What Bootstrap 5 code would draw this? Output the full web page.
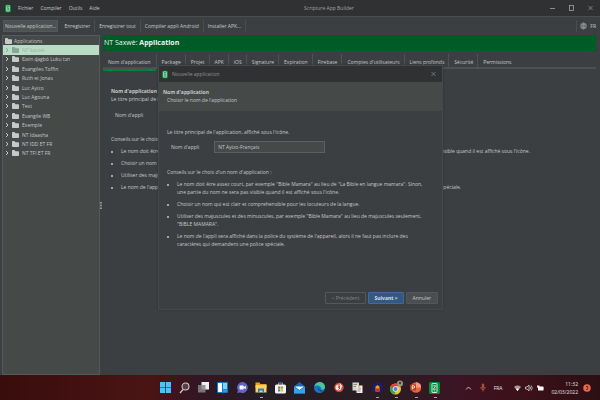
<!DOCTYPE html>
<html lang="fr">
<head>
<meta charset="utf-8">
<meta name="viewport" content="width=device-width, initial-scale=1">
<title>Scripture App Builder</title>
<link href="https://cdn.jsdelivr.net/npm/bootstrap@5.3.0/dist/css/bootstrap.min.css" rel="stylesheet">
<style>
body{font-family:"Open Sans",sans-serif;font-size:5px;line-height:8px;color:#c6c8c9;background:#3c3f41;overflow:hidden}
button,input{font:inherit;color:inherit;border:0;background:none;padding:0;margin:0}
svg{display:block;flex:none}
.titlebar{height:17px;background:#2f3133;border-bottom:1px solid #4a4d4f;padding-left:5px;gap:7px}
.menus{gap:7px}
.winbtns{gap:14px;margin-right:7px}
.wintitle{color:#a2a4a5}
.toolbar-row{height:18px;padding:0 4px 0 3px}
.toolbar-row button{height:12px;padding:0 4px;border-right:1px solid #4b4e50;white-space:nowrap}
.toolbar-row button.hot{background:#4c5152;padding:0 1px;border:1px solid #535859;margin-right:2px}
.lang{border-left:1px solid #4b4e50;padding:2px 0 2px 3px;gap:3px}
.tree{width:98px;margin-left:2px;background:#454948;border:1px solid #55595a}
.tree ul{display:grid;grid-template-rows:repeat(13,1fr);height:122px}
.tree li{gap:3px;padding-left:2px}
.tree li.top{gap:2px}
.tree li.sel{background:#b9dcc5;color:#9fb5a6}
.tree li.sel svg{color:#8aa496}
.splitter{width:3px}
.apphead{background:#005c27;color:#eef4f0;font-size:7px;line-height:16px;padding-left:1px}
.tabs{height:18px;padding-top:3px;border-bottom:2px solid #4d5052}
.tabs button{height:15px;padding:0 4px 0 5px;position:relative;white-space:nowrap;line-height:14px}
.tabs button+button{border-left:1px solid #4f5254}
.tabs button.cur{padding:0 5px}
.tabs button.cur::after{content:"";position:absolute;left:0;right:0;bottom:-2px;height:2px;background:#008038}
.main-pane{padding:18px 9px 0 8px;white-space:nowrap;overflow:hidden}
.field-row{padding:8px 0 16px 4px}
.tips{padding-left:10px;margin:4px 0 0}
.tips li{margin-bottom:4px}
.dialog-box{position:absolute;left:158px;top:65px;width:285px;height:245px;background:#3c3f41;border:1px solid #45484a;box-shadow:0 0 2px #303234}
.dlg-title{height:16px;background:#2f3133;color:#8f9192;padding:0 6px 0 3px;gap:4px}
.dlg-head{background:#454948;height:29px;padding:6px 4px}
.dlg-body{padding:17px 15px 0 8px}
.dlg-body .field-row{padding:5px 0 15px 4px;gap:15px}
.dlg-body input{width:111px;height:12px;background:#454948;border:1px solid #5c6061;padding:0 3px}
.dlg-foot{padding:0 4px 5px;gap:2px}
.dlg-foot button{height:12px;padding:0 6px;border:1px solid #54585a;background:#4a4e50;border-radius:1px;line-height:10px}
.dlg-foot .prev{background:#3c3f41;color:#838688}
.dlg-foot .next{background:#365880;border-color:#416a99;color:#d7dfe8;font-weight:bold;padding:0 5px}
.taskbar{height:25px;background:linear-gradient(90deg,#390d0d 0,#4a1414 25%,#351522 32%,#261c25 42%,#2a1c22 65%,#3d1322 78%,#3b1019 88%,#2b1012);color:#e8e2e2}
.taskicons{position:absolute;left:159px;right:159px;bottom:0;height:25px}
.taskicons button{width:12px;height:25px;position:relative;display:flex;align-items:center;justify-content:center}
.taskicons .on::after{content:"";position:absolute;left:5px;bottom:2px;width:3px;height:1px;background:#aaa}
.tray{padding-right:9px}
.clock{margin:0 5px 0 7px}
</style>
<script src="https://cdn.jsdelivr.net/npm/bootstrap@5.3.0/dist/js/bootstrap.bundle.min.js"></script>
</head>
<body class="d-flex flex-column vh-100">
<svg width="0" height="0" class="position-absolute">
<symbol id="folder" viewBox="0 0 14 12"><path fill="currentColor" d="M0 1.500Q0 0 1.500 0H5L7 2.500H12.500Q14 2.500 14 4V10.500Q14 12 12.500 12H1.500Q0 12 0 10.500Z"/></symbol>
<symbol id="chev" viewBox="0 0 8 12"><path d="M2 2l4 4-4 4" fill="none" stroke="currentColor" stroke-width="2"/></symbol>
<symbol id="sab" viewBox="0 0 14 18"><rect width="14" height="18" rx="3" fill="#078a3c"/><rect x="3.500" y="2.500" width="7" height="13" rx="1" fill="none" stroke="#e9f5ed" stroke-width="1.400"/><path d="M5 6h4L5 11h4M5.500 13.500h3" stroke="#e9f5ed" fill="none" stroke-width="1.200"/></symbol>
<symbol id="xx" viewBox="0 0 10 10"><path d="M1 1l8 8M9 1L1 9" stroke="currentColor" stroke-width="1.400"/></symbol>
</svg>
<header class="titlebar d-flex align-items-center position-relative">
  <svg width="6" height="9"><use href="#sab"/></svg>
  <nav class="menus d-flex"><button>Fichier</button><button>Compiler</button><button>Outils</button><button>Aide</button></nav>
  <span class="wintitle position-absolute start-50 ms-1">Scripture App Builder</span>
  <div class="winbtns d-flex ms-auto align-items-center wintitle">
    <button aria-label="Réduire"><svg width="5" height="6" viewBox="0 0 5 6"><path d="M0 3.500h5" stroke="currentColor" stroke-width=".8"/></svg></button>
    <button aria-label="Agrandir"><svg width="5" height="6" viewBox="0 0 5 6"><rect x=".5" y=".5" width="4" height="5" fill="none" stroke="currentColor" stroke-width=".8"/></svg></button>
    <button aria-label="Fermer"><svg width="5" height="6"><use href="#xx"/></svg></button>
  </div>
</header>
<div class="toolbar-row d-flex align-items-center">
  <button class="hot">Nouvelle application...</button><button>Enregistrer</button><button>Enregistrer tout</button><button>Compiler appli Android</button><button>Installer APK...</button>
  <div class="lang ms-auto d-flex align-items-center"><svg width="7" height="8" viewBox="0 0 14 14"><g fill="none" stroke="#9a9d9e" stroke-width="1.200"><circle cx="7" cy="7" r="6"/><ellipse cx="7" cy="7" rx="2.800" ry="6"/><path d="M1 7h12M2 4h10M2 10h10M7 1v12"/></g></svg><span>FR</span></div>
</div>
<div class="d-flex flex-fill">
  <aside class="tree flex-shrink-0">
    <ul class="list-unstyled m-0">
      <li class="top d-flex align-items-center"><svg width="7" height="6"><use href="#folder"/></svg>Applications</li>
      <li class="sel d-flex align-items-center"><svg width="4" height="6"><use href="#chev"/></svg><svg width="7" height="6"><use href="#folder"/></svg>NT Saxwè</li>
      <li class="d-flex align-items-center"><svg width="4" height="6"><use href="#chev"/></svg><svg width="7" height="6"><use href="#folder"/></svg>Ɛwin ɖagbó Luku tɔn</li>
      <li class="d-flex align-items-center"><svg width="4" height="6"><use href="#chev"/></svg><svg width="7" height="6"><use href="#folder"/></svg>Evangiles Toffin</li>
      <li class="d-flex align-items-center"><svg width="4" height="6"><use href="#chev"/></svg><svg width="7" height="6"><use href="#folder"/></svg>Ruth et Jonas</li>
      <li class="d-flex align-items-center"><svg width="4" height="6"><use href="#chev"/></svg><svg width="7" height="6"><use href="#folder"/></svg>Luc Ayizo</li>
      <li class="d-flex align-items-center"><svg width="4" height="6"><use href="#chev"/></svg><svg width="7" height="6"><use href="#folder"/></svg>Luc Agouna</li>
      <li class="d-flex align-items-center"><svg width="4" height="6"><use href="#chev"/></svg><svg width="7" height="6"><use href="#folder"/></svg>Text</li>
      <li class="d-flex align-items-center"><svg width="4" height="6"><use href="#chev"/></svg><svg width="7" height="6"><use href="#folder"/></svg>Evangile WB</li>
      <li class="d-flex align-items-center"><svg width="4" height="6"><use href="#chev"/></svg><svg width="7" height="6"><use href="#folder"/></svg>Exemple</li>
      <li class="d-flex align-items-center"><svg width="4" height="6"><use href="#chev"/></svg><svg width="7" height="6"><use href="#folder"/></svg>NT Idaasha</li>
      <li class="d-flex align-items-center"><svg width="4" height="6"><use href="#chev"/></svg><svg width="7" height="6"><use href="#folder"/></svg>NT IDD ET FR</li>
      <li class="d-flex align-items-center"><svg width="4" height="6"><use href="#chev"/></svg><svg width="7" height="6"><use href="#folder"/></svg>NT TFI ET FR</li>
    </ul>
  </aside>
  <div class="splitter d-flex align-items-center"><svg width="2" height="7" viewBox="0 0 2 7"><path d="M1 0v7" stroke="#b5b7b8" stroke-width="1.500" stroke-dasharray="1.500 1.200"/></svg></div>
  <main class="flex-fill overflow-hidden me-1">
    <div class="apphead">NT Saxwè: <b>Application</b></div>
    <nav class="tabs d-flex"><button class="cur">Nom d'application</button><button>Package</button><button>Projet</button><button>APK</button><button>iOS</button><button>Signature</button><button>Expiration</button><button>Firebase</button><button>Comptes d'utilisateurs</button><button>Liens profonds</button><button>Sécurité</button><button>Permissions</button></nav>
    <section class="main-pane">
      <div class="fw-bold">Nom d'application</div>
      <div>Le titre principal de l'application, affiché sous l'icône.</div>
      <div class="field-row">Nom d'appli</div>
      <div>Conseils sur le choix d'un nom d'application :</div>
      <ul class="tips">
        <li>Le nom doit être assez court, par exemple "Bible Mamara" au lieu de "La Bible en langue mamara". Sinon, une partie du nom ne sera pas visible quand il est affiché sous l'icône.</li>
        <li>Choisir un nom qui est clair et comprehensible pour les locuteurs de la langue.</li>
        <li>Utiliser des majuscules et des minuscules, par exemple "Bible Mamara".</li>
        <li>Le nom de l'appli sera affiché dans la police du système de l'appareil, alors il ne faut pas inclure des caractères qui demandent une police spéciale.</li>
      </ul>
    </section>
  </main>
</div>
<section class="dialog-box d-flex flex-column" role="dialog" aria-label="Nouvelle application">
  <div class="dlg-title d-flex align-items-center"><svg width="6" height="9"><use href="#sab"/></svg><span>Nouvelle application</span><button class="ms-auto" aria-label="Fermer"><svg width="5" height="6"><use href="#xx"/></svg></button></div>
  <div class="dlg-head"><div class="fw-bold">Nom d'application</div><div class="ps-1">Choisir le nom de l'application</div></div>
  <div class="dlg-body flex-fill">
    <div>Le titre principal de l'application, affiché sous l'icône.</div>
    <div class="field-row d-flex align-items-center"><label for="appname">Nom d'appli</label><input id="appname" type="text" value="NT Ayizo-Français"></div>
    <div>Conseils sur le choix d'un nom d'application :</div>
    <ul class="tips">
      <li>Le nom doit être assez court, par exemple "Bible Mamara" au lieu de "La Bible en langue mamara". Sinon, une partie du nom ne sera pas visible quand il est affiché sous l'icône.</li>
      <li>Choisir un nom qui est clair et comprehensible pour les locuteurs de la langue.</li>
      <li>Utiliser des majuscules et des minuscules, par exemple "Bible Mamara" au lieu de majuscules seulement, "BIBLE MAMARA".</li>
      <li>Le nom de l'appli sera affiché dans la police du système de l'appareil, alors il ne faut pas inclure des caractères qui demandent une police spéciale.</li>
    </ul>
  </div>
  <div class="dlg-foot d-flex justify-content-end"><button class="prev" disabled>&lt; Précédent</button><button class="next">Suivant &gt;</button><button>Annuler</button></div>
</section>
<footer class="taskbar d-flex align-items-center flex-shrink-0">
  <div class="taskicons d-flex justify-content-between">
    <button aria-label="Démarrer"><svg width="11" height="11" viewBox="0 0 22 22"><path fill="#4cc2f5" d="M0 0h10.300v10.300H0zM11.700 0H22v10.300H11.700zM0 11.700h10.300V22H0zM11.700 11.700H22V22H11.700z"/></svg></button>
    <button aria-label="Rechercher"><svg width="11" height="12" viewBox="0 0 22 24"><circle cx="13" cy="9" r="7" fill="#5a3f49" stroke="#cfc8cb" stroke-width="2.200"/><path d="M8 15L2 22" stroke="#cfc8cb" stroke-width="2.600"/></svg></button>
    <button aria-label="Bureaux"><svg width="11" height="11" viewBox="0 0 22 22"><path fill="#eee" d="M7 0h15v15H7z"/><path fill="#858585" d="M0 6h15v15H0z" opacity=".85"/></svg></button>
    <button aria-label="Widgets"><svg width="11" height="11" viewBox="0 0 22 22"><rect width="22" height="22" rx="2" fill="#1676c8"/><path fill="#f4fbff" d="M2 2h8v18H2z"/><path fill="#7fd0fa" d="M12 2h8v12h-8z"/><path fill="#2c9be8" d="M12 15h8v5h-8z"/></svg></button>
    <button aria-label="Conversation"><svg width="11" height="11" viewBox="0 0 22 22"><path fill="#6264c7" d="M11 0a11 11 0 1 1-5 21L0 22l2-5A11 11 0 0 1 11 0z"/><rect x="5" y="7" width="8.500" height="8" rx="2" fill="#fff"/><path fill="#fff" d="M14 10l3.500-2.500v7L14 12z"/></svg></button>
    <button class="on" aria-label="Explorateur"><svg width="12" height="11" viewBox="0 0 24 22"><path fill="#e6a21c" d="M1 1h8l2 3h12v8H1z"/><path fill="#ffd35a" d="M1 6h22v15H1z"/><path fill="#1d82cf" d="M6 13h12v8h-3v-4H9v4H6z"/></svg></button>
    <button aria-label="Store"><svg width="11" height="12" viewBox="0 0 22 24"><path d="M7 6V2h8v4" fill="none" stroke="#45a9e0" stroke-width="2"/><rect y="5" width="22" height="18" rx="3" fill="#f4f4f4"/><path fill="#e5502c" d="M6 9h4.500v4.500H6z"/><path fill="#7cb518" d="M11.500 9H16v4.500h-4.500z"/><path fill="#1696dd" d="M6 14.500h4.500V19H6z"/><path fill="#f6b91a" d="M11.500 14.500H16V19h-4.500z"/></svg></button>
    <button aria-label="Courrier"><svg width="11" height="12" viewBox="0 0 22 24"><path fill="#1467b5" d="M0 9L11 0l11 9v14H0z"/><path fill="#fff" d="M2 9h18l-9 7z"/><path fill="#2fa4ec" d="M0 9l11 8 11-8v14H0z"/></svg></button>
    <button aria-label="Edge"><svg width="11" height="11" viewBox="0 0 22 22"><circle cx="11" cy="11" r="11" fill="#1574c4"/><path fill="#45c8a0" d="M1 8C3 2 8 0 11 0c7 0 11 5 11 10 0 4-4 6-7 5-2-1 0-2-1-4C11 6 4 6 1 8z"/><path fill="#0d3f78" d="M9 10c-2 4 2 10 9 9l-2-2c-4 0-7-3-7-7z"/></svg></button>
    <button aria-label="Lecteur"><svg width="10" height="11" viewBox="0 0 20 22"><circle cx="10" cy="11" r="9.500" fill="#d7442f"/><circle cx="9" cy="11" r="6" fill="#f6e9e3"/><path d="M8 8h4l-3 3 3 1-3 3" fill="none" stroke="#b23525" stroke-width="2"/><path d="M12 3l4 7" stroke="#fff" stroke-width="2"/></svg></button>
    <button aria-label="Documents"><svg width="11" height="12" viewBox="0 0 22 24"><path fill="#d5d5cf" d="M1 1h13v16H1z"/><path fill="#f1efe8" d="M9 7h12v15H9z"/><path d="M3 5h7M3 9h5M11 14h7M11 18h6" stroke="#77797a" stroke-width="1.500"/><path fill="#e2bd49" d="M12 5l6 7-6-1z"/></svg></button>
    <button class="on" aria-label="Audacity"><svg width="11" height="11" viewBox="0 0 22 22"><path d="M3 16V11a8 8 0 0 1 16 0v5" fill="none" stroke="#191a8d" stroke-width="4"/><path fill="#f39b16" d="M7 9l4-3 4 3v10H7z"/><path fill="#d52c16" d="M8 13h6v5H8z"/><path fill="#181a82" d="M1 13h5v8H1zM16 13h5v8h-5z"/></svg></button>
    <button class="on" aria-label="Chrome"><svg width="13" height="15" viewBox="0 0 26 30"><circle cx="11" cy="18" r="11" fill="#f5c51c"/><path fill="#de4334" d="M1.500 12.500a11 11 0 0 1 19 0H11l-5 8z"/><path fill="#2fa653" d="M1.500 12.500L7 21l4 2-2 6A11 11 0 0 1 1.500 12.500z"/><circle cx="11" cy="18" r="5" fill="#4a86e8" stroke="#fff" stroke-width="1.500"/><circle cx="20" cy="7" r="6" fill="#9b938c"/><circle cx="20" cy="6" r="2.500" fill="#4b3b35"/></svg></button>
    <button class="on" aria-label="PowerPoint"><svg width="11" height="11" viewBox="0 0 22 22"><circle cx="12" cy="11" r="10.500" fill="#e8643d"/><path fill="#f79b7b" d="M12 .5A10.500 10.500 0 0 1 22.500 11H12z"/><rect y="5" width="12" height="12" rx="1" fill="#b93a1d"/><path d="M4.500 15V7.500h2.500a2 2 0 0 1 0 4.500H4.500" fill="none" stroke="#fff" stroke-width="1.800"/></svg></button>
    <button class="on" aria-label="Scripture App Builder"><svg width="11" height="12" viewBox="0 0 22 24"><rect width="22" height="24" rx="3" fill="#078a3c"/><rect x="6" y="3" width="10" height="18" rx="1" fill="none" stroke="#e9f5ed" stroke-width="1.800"/><path d="M8.500 7.500h5l-5 7h5M9.500 18h3" stroke="#e9f5ed" fill="none" stroke-width="1.600"/></svg></button>
  </div>
  <div class="tray d-flex align-items-center ms-auto position-relative">
    <svg width="7" height="8" viewBox="0 0 14 16"><path d="M2 11l5-5 5 5" fill="none" stroke="#d8d0d2" stroke-width="1.800"/></svg>
    <svg class="ms-2" width="6" height="9" viewBox="0 0 12 18"><rect x="3.500" y="1" width="5" height="10" rx="2.500" fill="#a4523b"/><path d="M1.500 8a4.500 5 0 0 0 9 0M6 13v4" fill="none" stroke="#c46a50" stroke-width="1.500"/></svg>
    <span class="ms-2 me-2 pe-1">FRA</span>
    <svg width="7" height="8" viewBox="0 0 14 16"><path fill="#cfc7ca" d="M0 6a10 10 0 0 1 14 0L7 14z" opacity=".75"/><path fill="#fff" d="M4 10a5 5 0 0 1 6 0l-3 4z"/></svg>
    <svg class="ms-1" width="8" height="8" viewBox="0 0 16 16"><path d="M1 6h3l4-4v12l-4-4H1zM10 5q2 3 0 6M12.500 3q4 5 0 10" fill="none" stroke="#ded6d9" stroke-width="1.500"/></svg>
    <svg class="ms-1" width="7" height="8" viewBox="0 0 14 16"><rect x="2" y="5" width="11" height="8" rx="1" fill="#fff"/><path d="M0 3h5v4H0zM13 8h1v2h-1z" fill="#eee"/></svg>
    <div class="clock text-end">11:32<br>02/03/2022</div>
    <svg width="8" height="8" viewBox="0 0 16 16"><circle cx="8" cy="8" r="7.500" fill="#e9694d"/><path d="M6 5h4L8 7.500q3 0 2 2.500-1.500 2-4 .5" fill="none" stroke="#521812" stroke-width="1.400"/></svg>
  </div>
</footer>
</body>
</html>
